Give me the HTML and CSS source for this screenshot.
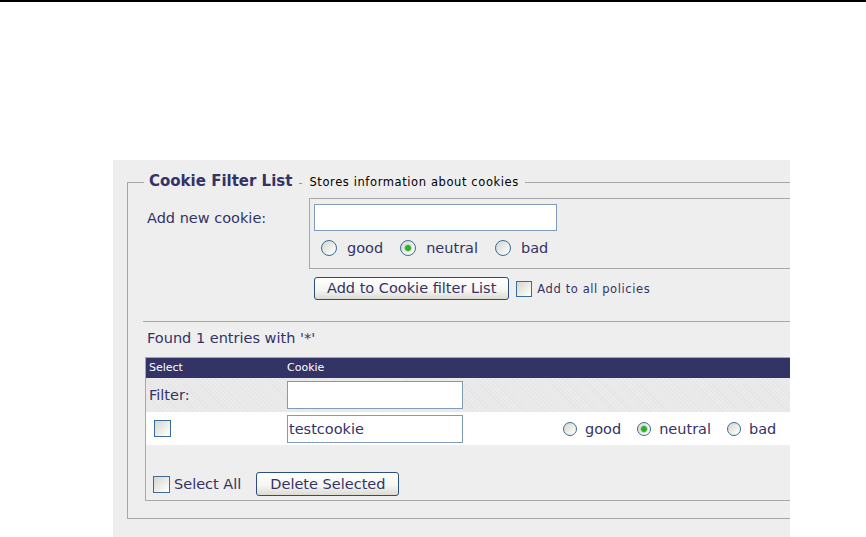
FILE: index.html
```html
<!DOCTYPE html>
<html>
<head>
<meta charset="utf-8">
<title>Cookie Filter List</title>
<link rel="stylesheet" href="styles.css">
</head>
<body>
<div class="topbar"></div>
<div class="page">
  <div class="panel">
    <fieldset class="box">
      <legend class="legend"><span class="title">Cookie Filter List</span><span class="dash">-</span><span class="sub">Stores information about cookies</span></legend>
      <div class="add-row">
        <label class="add-label">Add new cookie:</label>
        <div class="add-controls">
          <div class="add-box">
            <input type="text" class="text-input wide">
            <div class="radios">
              <label class="opt"><input type="radio" name="r0" class="radio"><span>good</span></label>
              <label class="opt"><input type="radio" name="r0" class="radio" checked><span>neutral</span></label>
              <label class="opt"><input type="radio" name="r0" class="radio"><span>bad</span></label>
            </div>
          </div>
          <div class="actions">
            <button class="btn">Add to Cookie filter List</button>
            <label class="small-check"><input type="checkbox" class="check small"><span>Add to all policies</span></label>
          </div>
        </div>
      </div>
      <hr class="sep">
      <p class="found">Found 1 entries with '*'</p>
      <div class="list">
        <div class="list-head grid">
          <span class="cell c1">Select</span>
          <span class="cell c2">Cookie</span>
        </div>
        <div class="list-filter grid">
          <span class="cell c1">Filter:</span>
          <span class="cell c2"><input type="text" class="text-input cell-input"></span>
        </div>
        <div class="list-row grid">
          <span class="cell c1"><input type="checkbox" class="check row-check"></span>
          <span class="cell c2"><input type="text" class="text-input cell-input" value="testcookie"></span>
          <span class="cell c3">
            <label class="opt sm"><input type="radio" name="r1" class="radio sm"><span>good</span></label>
            <label class="opt sm"><input type="radio" name="r1" class="radio sm" checked><span>neutral</span></label>
            <label class="opt sm"><input type="radio" name="r1" class="radio sm"><span>bad</span></label>
          </span>
        </div>
        <div class="list-foot">
          <label class="select-all"><input type="checkbox" class="check"><span>Select All</span></label>
          <button class="btn del">Delete Selected</button>
        </div>
      </div>
    </fieldset>
  </div>
</div>
</body>
</html>
```

FILE: styles.css
```css
html, body {
  margin: 0;
  padding: 0;
  background: #fff;
  overflow: hidden;
}
body {
  font-family: "DejaVu Sans", Verdana, sans-serif;
  color: #333366;
}
.topbar {
  height: 2px;
  background: #000;
}
.page {
  padding: 158px 0 0 113px;
}
.panel {
  width: 677px;
  height: 377px;
  background: #eeeeee;
  overflow: hidden;
}
.box {
  box-sizing: border-box;
  width: 740px;
  min-width: 0;
  margin: 12px 0 0 14px;
  padding: 0 0 17px 16px;
  border: 1px solid #a6a6a6;
  border-right: 0;
}
.legend {
  margin-left: 0;
  padding: 0 6px 0 5px;
  line-height: 18px;
  white-space: nowrap;
}
.title {
  font-size: 15px;
  font-weight: bold;
  color: #333366;
}
.dash {
  font-size: 11px;
  color: #888;
  margin: 0 7px 0 6px;
}
.sub {
  font-size: 11.5px;
  letter-spacing: 0.6px;
  color: #000;
}
.add-row {
  display: flex;
  margin-top: 6px;
}
.add-label {
  box-sizing: border-box;
  width: 165px;
  flex: none;
  padding: 11px 0 0 3px;
  font-size: 14.5px;
  line-height: 18px;
}
.add-controls {
  flex: 1;
}
.add-box {
  border: 1px solid #a8a8a8;
  border-right: 0;
  padding: 5px 0 9px 4px;
}
.text-input {
  box-sizing: border-box;
  display: block;
  border: 1px solid #7f9db9;
  background: #fff;
  margin: 0;
  padding: 0 1px;
  font-family: "DejaVu Sans", Verdana, sans-serif;
  font-size: 14.5px;
  color: #333366;
  outline: none;
}
.wide {
  width: 243px;
  height: 27px;
}
.radios {
  display: flex;
  align-items: center;
  height: 22px;
  margin-top: 6px;
  padding-left: 7px;
}
.opt {
  display: flex;
  align-items: center;
  font-size: 14.5px;
  margin-right: 17px;
}
.radio {
  -webkit-appearance: none;
  appearance: none;
  box-sizing: border-box;
  width: 16px;
  height: 16px;
  margin: 0 10px 0 0;
  border: 1px solid #3a6c9a;
  border-radius: 50%;
  background: linear-gradient(135deg, #d6d6cf 0%, #f4f4f0 70%, #fff 100%);
}
.radio:checked {
  background:
    radial-gradient(circle, #2fae2f 0 2.5px, #8fd18f 3.2px, rgba(255,255,255,0) 4px),
    linear-gradient(135deg, #d6d6cf 0%, #f4f4f0 70%, #fff 100%);
}
.radio.sm {
  width: 14px;
  height: 14px;
  margin-right: 8px;
}
.opt.sm {
  margin-right: 16px;
}
.actions {
  display: flex;
  align-items: center;
  margin-top: 8px;
  padding-left: 5px;
}
.btn {
  box-sizing: border-box;
  height: 23px;
  padding: 0 12px;
  border: 1px solid #2a4f7c;
  border-radius: 3px;
  background: linear-gradient(#ffffff 0%, #f4f4f0 60%, #dcdcd3 100%);
  font-family: "DejaVu Sans", Verdana, sans-serif;
  font-size: 14.5px;
  color: #333366;
  line-height: 21px;
}
.small-check {
  display: flex;
  align-items: center;
  margin-left: 7px;
  font-size: 11.5px;
  letter-spacing: 0.6px;
  color: #333366;
}
.check {
  -webkit-appearance: none;
  appearance: none;
  box-sizing: border-box;
  width: 17px;
  height: 17px;
  margin: 0;
  border: 1px solid #3a6c9a;
  background: linear-gradient(135deg, #d6d6cf 0%, #f4f4f0 70%, #fff 100%);
}
.check.small {
  width: 16px;
  height: 16px;
  margin-right: 5px;
}
.sep {
  margin: 21px 0 0 -1px;
  height: 0;
  border: 0;
  border-top: 1px solid #a8a8a8;
}
.found {
  margin: 0 0 10px 0;
  padding: 7px 0 0 3px;
  font-size: 14.5px;
  line-height: 18px;
}
.list {
  margin-left: 1px;
  border-top: 1px solid #a8a8a8;
  border-left: 1px solid #a8a8a8;
  border-bottom: 1px solid #a8a8a8;
}
.grid {
  display: grid;
  grid-template-columns: 137px 280px 1fr;
  align-items: center;
}
.cell {
  box-sizing: border-box;
  padding-left: 4px;
}
.c1 {
  padding-left: 3px;
}
.list-head {
  height: 20px;
  background: #333366;
  color: #fff;
  font-size: 11px;
  line-height: 20px;
}
.list-filter {
  height: 34px;
  background: repeating-linear-gradient(45deg, #e5e5e5 0 1px, #ebebeb 1px 3px);
  font-size: 14.5px;
}
.cell-input {
  width: 176px;
  height: 28px;
}
.list-row {
  height: 33px;
  background: #fff;
}
.row-check {
  margin-left: 5px;
  display: block;
}
.c3 {
  display: flex;
  align-items: center;
  padding-left: 0;
  white-space: nowrap;
}
.list-foot {
  display: flex;
  align-items: center;
  padding: 27px 0 4px 7px;
}
.select-all {
  display: flex;
  align-items: center;
  font-size: 14.5px;
}
.select-all .check {
  margin-right: 4px;
}
.del {
  height: 24px;
  margin-left: 15px;
  padding: 0 13px;
}
```
